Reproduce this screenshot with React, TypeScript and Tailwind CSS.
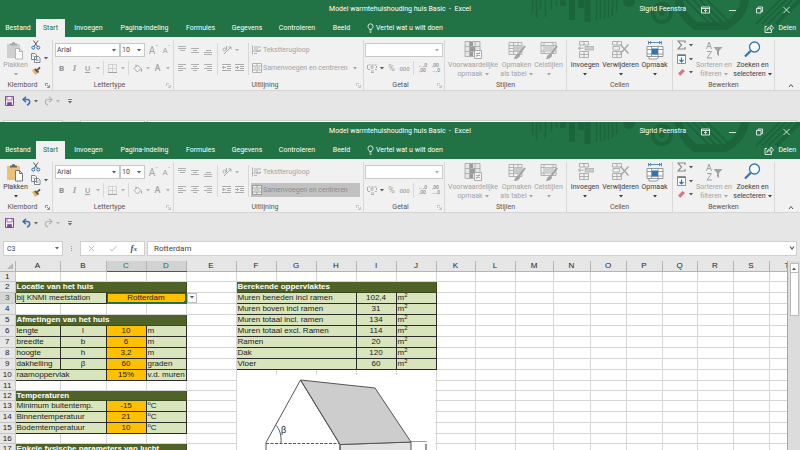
import type { ReactNode } from 'react';
import clsx from 'clsx';

const TABS = [
  { label: 'Bestand', width: 'w-[36px]' },
  { label: 'Start', width: 'w-[29px]' },
  { label: 'Invoegen', width: 'w-[47px]' },
  { label: 'Pagina-indeling', width: 'w-[65px]' },
  { label: 'Formules', width: 'w-[47px]' },
  { label: 'Gegevens', width: 'w-[46px]' },
  { label: 'Controleren', width: 'w-[54px]' },
  { label: 'Beeld', width: 'w-[35px]' },
];

const COLUMNS: [string, number][] = [
  ['A', 45], ['B', 46], ['C', 40], ['D', 40], ['E', 50], ['F', 40], ['G', 40], ['H', 40], ['I', 40], ['J', 40],
  ['K', 39], ['L', 40], ['M', 38], ['N', 37], ['O', 36], ['P', 36], ['Q', 35], ['R', 36], ['S', 36], ['T', 36],
];
const ROW_HEADER = 15;
const SHEET_WIDTH = COLUMNS.reduce((sum, [, w]) => sum + w, ROW_HEADER);
const SHORT_ROWS = [1, 11, 12, 16];
const ROW_NUMBERS = Array.from({ length: 17 }, (_, i) => i + 1);

type Kind = 'head' | 'label' | 'mid' | 'input' | 'unit' | 'selected';
type CellData = { col: string; span?: number; kind: Kind; text: ReactNode };

const sqm = <>m<sup className="text-[6px] leading-none">2</sup></>;
const degC = <><sup className="text-[6px] leading-none">o</sup>C</>;

function area(label: string, value: string): CellData[] {
  return [
    { col: 'F', span: 3, kind: 'label', text: label },
    { col: 'I', kind: 'mid', text: value },
    { col: 'J', kind: 'unit', text: sqm },
  ];
}

function size(label: string, symbol: string, value: string, unit: string): CellData[] {
  return [
    { col: 'A', kind: 'label', text: label },
    { col: 'B', kind: 'mid', text: symbol },
    { col: 'C', kind: 'input', text: value },
    { col: 'D', kind: 'unit', text: unit },
  ];
}

function param(label: string, value: string, unit: ReactNode): CellData[] {
  return [
    { col: 'A', span: 2, kind: 'label', text: label },
    { col: 'C', kind: 'input', text: value },
    { col: 'D', kind: 'unit', text: unit },
  ];
}

const CELLS: Record<number, CellData[]> = {
  2: [
    { col: 'A', span: 4, kind: 'head', text: 'Locatie van het huis' },
    { col: 'F', span: 5, kind: 'head', text: 'Berekende oppervlaktes' },
  ],
  3: [
    { col: 'A', span: 2, kind: 'label', text: 'bij KNMI meetstation' },
    { col: 'C', span: 2, kind: 'selected', text: 'Rotterdam' },
    ...area('Muren beneden incl ramen', '102,4'),
  ],
  4: area('Muren boven incl ramen', '31'),
  5: [{ col: 'A', span: 4, kind: 'head', text: 'Afmetingen van het huis' }, ...area('Muren totaal incl. ramen', '134')],
  6: [...size('lengte', 'l', '10', 'm'), ...area('Muren totaal excl. Ramen', '114')],
  7: [...size('breedte', 'b', '6', 'm'), ...area('Ramen', '20')],
  8: [...size('hoogte', 'h', '3,2', 'm'), ...area('Dak', '120')],
  9: [...size('dakhelling', 'β', '60', 'graden'), ...area('Vloer', '60')],
  10: param('raamoppervlak', '15%', 'v.d. muren'),
  12: [{ col: 'A', span: 4, kind: 'head', text: 'Temperaturen' }],
  13: param('Minimum buitentemp.', '-15', degC),
  14: param('Binnentemperatuur', '21', degC),
  15: param('Bodemtemperatuur', '10', degC),
  17: [{ col: 'A', span: 4, kind: 'head', text: 'Enkele fysische parameters van lucht' }],
};

const KIND_CLASS: Record<Kind, string> = {
  head: 'bg-[#4f6228] text-white font-bold border-[#3a4a1c]',
  label: 'bg-[#d8e4bc] border-[#2b2b2b]',
  mid: 'bg-[#d8e4bc] border-[#2b2b2b] text-center',
  input: 'bg-[#ffc000] border-[#2b2b2b] text-center',
  unit: 'bg-[#d8e4bc] border-[#2b2b2b]',
  selected: 'relative bg-[#ffc000] border-[#217346] text-center',
};

function Caret({ className }: { className?: string }) {
  return (
    <svg viewBox="0 0 4 3" className={clsx('h-[3px] w-1 shrink-0', className)} fill="currentColor" aria-hidden="true">
      <path d="M0 0h4L2 2.6z" />
    </svg>
  );
}

function CaretButton({ label, dark }: { label: string; dark?: boolean }) {
  return (
    <button aria-label={label} className={clsx('flex h-[14px] w-[7px] items-center justify-center', dark ? 'text-[#555]' : 'text-[#b5b5b5]')}>
      <Caret />
    </button>
  );
}

function Icon({ w = 10, h = 10, children }: { w?: number; h?: number; children: ReactNode }) {
  return (
    <svg width={w} height={h} viewBox={`0 0 ${w} ${h}`} fill="none" stroke="currentColor" strokeWidth="1" aria-hidden="true" className="shrink-0">
      {children}
    </svg>
  );
}

function Tool({ label, children }: { label: string; children: ReactNode }) {
  return (
    <button aria-label={label} className="flex h-[14px] w-[13px] items-center justify-center text-[#a3a3a3]">
      {children}
    </button>
  );
}

function Divider() {
  return <span className="mx-[2px] h-[14px] w-px bg-[#d8d8d8]" />;
}

function Group({ label, width, launcher, launcherDark, children }: { label: string; width: string; launcher?: boolean; launcherDark?: boolean; children: ReactNode }) {
  return (
    <section aria-label={label} className={clsx('flex shrink-0', width)}>
      <div className="flex h-[53px] grow flex-col">
        <div className="flex h-11 items-start">{children}</div>
        <div className="flex h-[9px] items-center text-[#555]">
          <span className="grow text-center">{label}</span>
          {launcher && (
            <button aria-label={`${label} instellingen`} className={clsx('mr-[2px]', launcherDark ? 'text-[#666]' : 'text-[#b5b5b5]')}>
              <Icon w={5} h={5}>
                <path d="M.5 3V.5H3M2 2l2 2M4.5 2v2.5H2" strokeWidth=".7" />
              </Icon>
            </button>
          )}
        </div>
      </div>
      <span className="mt-[3px] h-[50px] w-px bg-[#d8d8d8]" />
    </section>
  );
}

function BigButton({ lines, icon, width, enabled }: { lines: string[]; icon: ReactNode; width: string; enabled?: boolean }) {
  return (
    <button className={clsx('flex shrink-0 flex-col items-center pt-1 whitespace-nowrap', width, enabled ? 'text-[#3b3b3b]' : 'text-[#a3a3a3]')}>
      <span className="flex h-5 items-start">{icon}</span>
      <span className="leading-[9px]">{lines[0]}</span>
      <span className="flex h-[9px] items-center gap-[2px] leading-[9px]">
        {lines[1]}
        <Caret />
      </span>
    </button>
  );
}

function Combo({ label, value, width, disabled }: { label: string; value: string; width: string; disabled?: boolean }) {
  return (
    <span className={clsx('relative h-[14px] border border-[#c9c9c9] bg-white', width)}>
      <select aria-label={label} disabled={disabled} className="block h-3 w-full appearance-none pl-px text-[7px] leading-3 text-[#444]">
        <option>{value}</option>
      </select>
      <Caret className={clsx('pointer-events-none absolute top-[5px] right-[3px]', disabled ? 'text-[#aaa]' : 'text-[#555]')} />
    </span>
  );
}

function Lines({ d }: { d: string }) {
  return (
    <Icon w={9}>
      <path d={d} stroke="#b0b0b0" />
    </Icon>
  );
}

function TitleArt() {
  return (
    <svg viewBox="0 0 280 37" className="pointer-events-none absolute top-0 right-0 h-[37px] w-[280px]" fill="none" stroke="#1c653c" aria-hidden="true">
      <path d="M12.500 0v13M16.500 0v18M20.500 0v10M25.500 0v17M31.500 0v10M36.500 0v6" strokeWidth="1.500" />
      <path d="M43 0v6M52 0v20M61 0v8M67.500 0v22" strokeWidth="6" />
      <path d="M76.500 0v20M80.500 0v20M84.500 0v19M88.500 0v18M92.500 0v16M96.500 0v12" strokeWidth="1.500" />
      <circle cx="109" cy="1" r="6" fill="#1c653c" stroke="none" />
      <circle cx="142" cy="13" r="9" strokeWidth="4" />
      <circle cx="142" cy="13" r="3" fill="#1c653c" stroke="none" />
      <path d="M158-2c2 12 8 21 17 28h30c12-6 20-17 20-28" strokeWidth="8" />
      <path d="M164-2l29 29M171-2l28 28M178-2l26 26M185-2l24 24" strokeWidth="2" />
      <path d="M242 24L268-2M248 24L274-2M236 24L262-2" strokeWidth="2" />
      <path d="M256 24L282-2" strokeWidth="4" />
    </svg>
  );
}

function TitleBar() {
  return (
    <header className="relative bg-[#217346] text-white">
      <TitleArt />
      <div className="relative grid h-[19px] grid-cols-[1fr_auto_1fr] items-center">
        <span />
        <h1 className="whitespace-pre">Model warmtehuishouding huis Basic  -  Excel</h1>
        <div className="flex items-center justify-end">
          <span className="pr-[6px]">Sigrid Feenstra</span>
          <button aria-label="Weergaveopties voor lint" className="flex w-[27px] justify-center">
            <Icon w={9} h={8}>
              <path d="M.5 1h8v6h-8zM.5 2.500h8M4.500 6.500V4M3 5l1.500-1.500L6 5" strokeWidth=".8" />
            </Icon>
          </button>
          <button aria-label="Minimaliseren" className="flex w-[27px] justify-center">
            <Icon w={7} h={8}>
              <path d="M0 4.500h7" strokeWidth=".8" />
            </Icon>
          </button>
          <button aria-label="Vorig formaat" className="flex w-[27px] justify-center">
            <Icon w={7} h={8}>
              <path d="M.5 2.500h4.500V7H.5zM2 2.500V1h4.500v4.500H5" strokeWidth=".8" />
            </Icon>
          </button>
          <button aria-label="Sluiten" className="flex w-[27px] justify-center">
            <Icon w={7} h={8}>
              <path d="M.5 1l6 6M6.500 1l-6 6" strokeWidth=".8" />
            </Icon>
          </button>
        </div>
      </div>
      <nav className="relative flex h-[18px] items-stretch">
        {TABS.map(({ label, width }) => (
          <button key={label} className={clsx('shrink-0 text-center', width, label === 'Start' && 'bg-[#f1f1f1] text-[#217346]')}>
            {label}
          </button>
        ))}
        <button className="ml-2 flex items-center gap-[2px]">
          <Icon w={7} h={10}>
            <path d="M2.500 6.500C2.500 5.500 1 5 1 3.300a2.500 2.500 0 0 1 5 0C6 5 4.500 5.500 4.500 6.500zM2.500 8h2M2.800 9.300h1.500" strokeWidth=".8" />
          </Icon>
          Vertel wat u wilt doen
        </button>
        <button className="mr-1 ml-auto flex items-center gap-1">
          <Icon w={10} h={9}>
            <path d="M3 2.500H1v6h6.500V6M3 6.500c0-2.500 1.500-3.500 4-3.500V1l2.500 3L7 6.500v-2c-2 0-3 .5-4 2z" strokeWidth=".8" />
          </Icon>
          Delen
        </button>
      </nav>
    </header>
  );
}

function PasteIcon({ enabled }: { enabled: boolean }) {
  return (
    <Icon w={19} h={19}>
      <path d="M1 3h13v14H1z" fill={enabled ? '#edc079' : '#cfcfcf'} stroke="none" />
      <path d="M4 4.500V2.500h2C6 .5 9 .5 9 2.500h2v2z" fill={enabled ? '#666' : '#a8a8a8'} stroke="none" />
      <path d="M9.500 7.500h4l3 3v7.500h-7zM13.500 7.500v3h3" fill="#fff" stroke={enabled ? '#777' : '#b5b5b5'} />
    </Icon>
  );
}

function Ribbon({ pasteEnabled, mergeActive }: { pasteEnabled: boolean; mergeActive: boolean }) {
  return (
    <div className="flex h-[54px] shrink-0 border-b border-[#d5d5d5] bg-[#f1f1f1]">
      <Group label="Klembord" width="w-[53px]" launcher launcherDark>
        <BigButton
          lines={['Plakken']}
          width="w-[31px]"
          enabled={pasteEnabled}
          icon={<PasteIcon enabled={pasteEnabled} />}
        />
        <div className="flex flex-col gap-[3px] pt-[3px]">
          <button aria-label="Knippen" className="flex">
            <Icon>
              <path d="M2.500.5l4 6M7 .5l-4 6" stroke="#5a5a5a" />
              <circle cx="2.300" cy="7.600" r="1.500" stroke="#2f6db5" />
              <circle cx="7.300" cy="7.600" r="1.500" stroke="#2f6db5" />
            </Icon>
          </button>
          <button aria-label="Kopiëren" className="flex items-center gap-[3px] text-[#555]">
            <Icon>
              <path d="M.5.500h3.500l1.500 1.500v4.500h-5zM3.500 3.500h4L9 5v4.500H3.500z" fill="#fff" stroke="#777" strokeWidth=".9" />
              <path d="M5 6h2.500M5 7.500h2.500M1.500 3h1.500" stroke="#5b8ac0" strokeWidth=".7" />
            </Icon>
            <Caret />
          </button>
          <button aria-label="Opmaak kopiëren" className="flex">
            <Icon>
              <path d="M1 4l3-1.500L7 6 5 9 3.500 8z" fill="#eab35f" stroke="none" />
              <path d="M4 3l3.500 3.500M6.500 3.800L9 1.300" stroke="#555" strokeWidth="1.800" />
            </Icon>
          </button>
        </div>
      </Group>

      <Group label="Lettertype" width="w-[121px]" launcher>
        <div className="flex flex-col gap-1 pt-[6px] pl-[2px]">
          <div className="flex items-center">
            <Combo label="Lettertype" value="Arial" width="w-[65px]" />
            <Combo label="Tekengrootte" value="10" width="w-[25px]" />
            <span className="w-[2px]" />
            <Tool label="Tekengrootte vergroten"><span className="text-[10px]">A</span><sup className="text-[6px]">ˆ</sup></Tool>
            <Tool label="Tekengrootte verkleinen"><span className="text-[8px]">A</span><sup className="text-[6px]">ˇ</sup></Tool>
          </div>
          <div className="flex items-center">
            <Tool label="Vet"><b className="text-[8px] text-[#8c8c8c]">B</b></Tool>
            <Tool label="Cursief"><i className="font-['Liberation_Serif'] text-[9px] font-bold">I</i></Tool>
            <Tool label="Onderstrepen"><u className="text-[8px] font-medium">U</u></Tool>
            <CaretButton label="Onderstrepingsstijl" />
            <Divider />
            <Tool label="Randen">
              <Icon w={9} h={9}>
                <path d="M.5 8.500V.5h8v8M4.500.500v8M.5 4.500h8" strokeWidth=".7" stroke="#c4c4c4" />
                <path d="M0 8.500h9" />
              </Icon>
            </Tool>
            <CaretButton label="Meer randen" />
            <Divider />
            <Tool label="Opvulkleur">
              <Icon w={10} h={9}>
                <path d="M1 4.500L4.500 1 8 4.500 4.500 8zM3 3V.5" strokeWidth=".9" />
                <path d="M8.500 5v2.500" strokeWidth="1.200" />
              </Icon>
            </Tool>
            <CaretButton label="Meer opvulkleuren" />
            <Tool label="Tekstkleur"><span className="text-[9px] font-medium">A</span></Tool>
            <CaretButton label="Meer tekstkleuren" />
          </div>
        </div>
      </Group>

      <Group label="Uitlijning" width="w-[190px]" launcher>
        <div className="flex items-start pt-[6px] pl-[2px]">
          <div className="grid grid-cols-3 gap-y-1">
            <Tool label="Boven uitlijnen"><Lines d="M0 1.500h8M0 3.500h8M2 5.500h5" /></Tool>
            <Tool label="Midden uitlijnen"><Lines d="M0 3.500h8M2 5.500h4M0 7.500h8" /></Tool>
            <Tool label="Onder uitlijnen"><Lines d="M2 5.500h5M0 7.500h8M0 9.500h8" /></Tool>
            <Tool label="Links uitlijnen"><Lines d="M0 1.500h8M0 3.500h5M0 5.500h8M0 7.500h5" /></Tool>
            <Tool label="Centreren"><Lines d="M0 1.500h8M2 3.500h4M0 5.500h8M2 7.500h4" /></Tool>
            <Tool label="Rechts uitlijnen"><Lines d="M0 1.500h8M3 3.500h5M0 5.500h8M3 7.500h5" /></Tool>
          </div>
          <span className="mx-[2px] h-8 w-px bg-[#d8d8d8]" />
          <div className="flex w-[28px] flex-col gap-1">
            <div className="flex">
              <Tool label="Afdrukstand">
                <Icon>
                  <path d="M2 9l7-7M6.500 2H9v2.500" strokeWidth=".9" />
                  <circle cx="2.500" cy="4.500" r="1.500" strokeWidth=".8" />
                  <path d="M4.500 1v4" strokeWidth=".9" />
                </Icon>
              </Tool>
              <CaretButton label="Afdrukstand kiezen" />
            </div>
            <div className="flex">
              <Tool label="Inspringing verkleinen">
                <Icon w={9}>
                  <path d="M0 1.500h9M5 3.500h4M5 5.500h4M0 7.500h9M4 4.500H.5M2 3L.5 4.500 2 6" strokeWidth=".9" />
                </Icon>
              </Tool>
              <Tool label="Inspringing vergroten">
                <Icon w={9}>
                  <path d="M0 1.500h9M5 3.500h4M5 5.500h4M0 7.500h9M0 4.500h3.500M2 3l1.500 1.500L2 6" strokeWidth=".9" />
                </Icon>
              </Tool>
            </div>
          </div>
          <span className="h-8 w-px bg-[#d8d8d8]" />
          <div className="ml-[2px] flex flex-col gap-1 whitespace-nowrap text-[#a3a3a3]">
            <button className="flex h-[14px] items-center gap-px pl-px">
              <Icon w={10}>
                <path d="M.5.500v9M2 2h7M2 4h4M2 8.500h3M.5 6h8V4.500M4 6h4" strokeWidth=".8" />
              </Icon>
              Tekstterugloop
            </button>
            <button
              aria-pressed={mergeActive}
              className={clsx('flex h-[14px] w-[109px] items-center gap-px pl-px', mergeActive && 'bg-[#c1c1c1] text-[#8c8c8c]')}
            >
              <Icon w={10}>
                <path d="M.5.500h9v9h-9zM.5 3h9M.5 7h9M5 .5V3M5 7v2.500" fill="#f6f6f6" strokeWidth=".8" />
                <path d="M2 5h6" strokeWidth=".8" />
              </Icon>
              <span className="grow text-left">Samenvoegen en centreren</span>
              {!mergeActive && <Caret className="mr-[3px]" />}
            </button>
          </div>
        </div>
      </Group>

      <Group label="Getal" width="w-[81px]" launcher>
        <div className="flex flex-col gap-1 pt-[6px] pl-px">
          <Combo label="Getalnotatie" value="" width="w-[78px]" disabled />
          <div className="flex items-center">
            <Tool label="Financiële notatie">
              <Icon w={10} h={9}>
                <path d="M.5 3V1h9v4.500H7M.5 3v2.500H3" strokeWidth=".9" strokeDasharray="2 1" />
                <circle cx="5" cy="3.300" r="1.200" strokeWidth=".8" />
                <path d="M4 7h3M4 8.500h3" strokeWidth=".8" />
              </Icon>
            </Tool>
            <CaretButton label="Valuta kiezen" dark />
            <Tool label="Procentnotatie"><span className="text-[9px]">%</span></Tool>
            <Tool label="Duizendtalnotatie"><span className="text-[6px] font-medium">000</span></Tool>
            <Divider />
            <Tool label="Meer decimalen">
              <span className="text-[5px] leading-[5px] font-medium text-[#8c8c8c]">←,0<br />,00</span>
            </Tool>
            <Tool label="Minder decimalen">
              <span className="text-[5px] leading-[5px] font-medium text-[#8c8c8c]">,00<br />→,0</span>
            </Tool>
          </div>
        </div>
      </Group>

      <Group label="Stijlen" width="w-[122px]">
        <BigButton
          lines={['Voorwaardelijke', 'opmaak']}
          width="w-[56px]"
          icon={
            <Icon w={18} h={19}>
              <path d="M1 .5h15v15H1zM1 5.500h15M1 10.500h15M5.500.500v15M11 .5v15" fill="#e6e6e6" strokeWidth=".8" />
              <path d="M6 1h3v4H6zM6 6h5v4H6zM6 11h3v4H6z" fill="#9a9a9a" stroke="none" />
              <path d="M10.500 9.500h7v8h-7z" fill="#f6f6f6" strokeWidth=".9" />
              <path d="M12 12.500h4M12 14.500h4M15.500 11l-3 5" strokeWidth=".8" />
            </Icon>
          }
        />
        <BigButton
          lines={['Opmaken', 'als tabel']}
          width="w-[31px]"
          icon={
            <Icon w={18} h={19}>
              <path d="M1 1.500h13v12H1zM1 4.500h13M1 7.500h13M1 10.500h13M5.500 1.500v12M10 1.500v12" fill="#f0f0f0" strokeWidth=".8" />
              <path d="M5.500 4.500H14v6H5.500z" fill="#c9c9c9" stroke="none" />
              <path d="M17 5l-6 8" strokeWidth="2" />
              <path d="M6 18c1-3 2-5 5-5.500l1 1.500c0 2.500-3 4-6 4z" fill="#a3a3a3" stroke="none" />
            </Icon>
          }
        />
        <BigButton
          lines={['Celstijlen']}
          width="w-[33px]"
          icon={
            <Icon w={18} h={19}>
              <path d="M1 1.500h15v11H1zM1 4.500h15M4 1.500v11M13 1.500v11M1 10h15" fill="#f0f0f0" strokeWidth=".8" />
              <path d="M4 4.500h9V10H4z" fill="#cfcfcf" stroke="none" />
              <path d="M17 5l-6 8" strokeWidth="2" />
              <path d="M6 18c1-3 2-5 5-5.500l1 1.500c0 2.500-3 4-6 4z" fill="#a3a3a3" stroke="none" />
            </Icon>
          }
        />
      </Group>

      <Group label="Cellen" width="w-[106px]">
        <BigButton
          lines={['Invoegen']}
          width="w-[36px]"
          enabled
          icon={
            <span className="text-[#a8a8a8]">
              <Icon w={17} h={18}>
                <path d="M2.500.500h9V4h-9zM7 .5V4M2.500 10.500h9v6h-9zM7 10.500v6M2.500 13.500h9" strokeWidth=".9" />
                <path d="M8 5.500h9v3.500H8z" fill="#cdcdcd" strokeWidth=".7" />
                <path d="M6.500 7.200h-5M3.500 5.200l-2 2 2 2" />
              </Icon>
            </span>
          }
        />
        <BigButton
          lines={['Verwijderen']}
          width="w-[35px]"
          enabled
          icon={
            <span className="text-[#a8a8a8]">
              <Icon w={17} h={18}>
                <path d="M.5.500h9V4h-9zM5 .5V4M.5 10.500h9v6h-9zM5 10.500v6M.5 13.500h9M1 5.500h6.500V9H1z" strokeWidth=".9" />
                <path d="M8.500 3.500l8 9M16.500 3.500l-8 9" strokeWidth="1.500" />
              </Icon>
            </span>
          }
        />
        <BigButton
          lines={['Opmaak']}
          width="w-[33px]"
          enabled
          icon={
            <Icon w={18} h={19}>
              <path d="M1 5.500h16v10H1zM1 8.500h16M1 13h16M5.500 5.500v10M12 5.500v10M3 15.500v2.500h8l2-2.500" stroke="#808080" strokeWidth=".8" fill="#fff" />
              <path d="M6 7.500h6v6H6z" fill="#2f75b5" stroke="none" />
              <path d="M3 1.500h12M5 0L3.500 1.500 5 3M13 0l1.500 1.500L13 3M2.500 0v3.500M15.500 0v3.500" stroke="#2f75b5" strokeWidth=".8" />
            </Icon>
          }
        />
      </Group>

      <Group label="Bewerken" width="w-[102px]">
        <div className="flex w-[22px] flex-col gap-1 pt-[3px] pl-1 text-[#555]">
          <button aria-label="AutoSom" className="flex items-center gap-[3px]">
            <Icon w={9}>
              <path d="M8 3V1H1l3.500 4L1 9h7V7" stroke="#8a8a8a" strokeWidth="1.200" />
            </Icon>
            <Caret />
          </button>
          <button aria-label="Doorvoeren" className="flex items-center gap-[3px]">
            <Icon w={9} h={10}>
              <path d="M.5.500h8v9h-8z" fill="#fff" stroke="#777" strokeWidth=".8" />
              <path d="M.5 1.500h8" stroke="#777" />
              <path d="M4.500 3.500V8M2.500 6l2 2 2-2" stroke="#2f75b5" strokeWidth="1.200" />
            </Icon>
            <Caret />
          </button>
          <button aria-label="Wissen" className="flex items-center gap-[3px]">
            <Icon w={9} h={9}>
              <path d="M1 5.500L5.500 1l2.500 2L3.500 7.500z" fill="#e0708a" stroke="none" />
              <path d="M1 5.500l2.500 2" stroke="#c9a0ab" />
            </Icon>
            <Caret />
          </button>
        </div>
        <BigButton
          lines={['Sorteren en', 'filteren']}
          width="w-[38px]"
          icon={
            <Icon w={18} h={19}>
              <path d="M1.500 8l2.500-7 2.500 7M2.500 5.500h3M2 10.500h4.500L2 17h5" />
              <path d="M8.500 6h9l-3.500 4v5l-2-1.500V10z" fill="#a3a3a3" stroke="none" />
            </Icon>
          }
        />
        <BigButton
          lines={['Zoeken en', 'selecteren']}
          width="w-[39px]"
          enabled
          icon={
            <Icon w={17} h={18}>
              <circle cx="10.500" cy="6" r="5" stroke="#2f75b5" strokeWidth="1.300" fill="#fff" />
              <path d="M6.800 9.800L1 15.500" stroke="#2f75b5" strokeWidth="2.200" />
            </Icon>
          }
        />
      </Group>

      <button aria-label="Lint samenvouwen" className="mr-[6px] ml-auto self-end pb-[2px] text-[#555]">
        <Icon w={6} h={5}>
          <path d="M1 4l2-2.500L5 4" />
        </Icon>
      </button>
    </div>
  );
}

function QuickAccess() {
  return (
    <div className="flex h-[28px] shrink-0 items-start bg-[#e6e6e6] pt-[5px] pl-[5px] text-[#666]">
      <button aria-label="Opslaan" className="flex">
        <Icon w={9}>
          <path d="M.5.500h8v9h-8z" fill="#f3ecf7" stroke="#80499c" />
          <path d="M2 .5h5V4H2z" fill="#fff" stroke="#80499c" strokeWidth=".7" />
          <path d="M2.500 9.500V6.500h4v3" fill="#80499c" stroke="#80499c" strokeWidth=".7" />
        </Icon>
      </button>
      <button aria-label="Ongedaan maken" className="ml-2 flex items-center gap-[3px]">
        <Icon w={9}>
          <path d="M4 .8L1 3.500l3 2.700M1 3.500h4.500c2.500 0 3.500 4-.5 5.500" stroke="#3b6fb0" strokeWidth="1.500" />
        </Icon>
        <Caret />
      </button>
      <button aria-label="Opnieuw" className="ml-[6px] flex items-center gap-[3px] text-[#b5b5b5]">
        <Icon w={9}>
          <path d="M5 .8l3 2.700-3 2.700M8 3.500H3.500C1 3.500 0 7.500 4 9" strokeWidth="1.200" />
        </Icon>
        <Caret />
      </button>
      <button aria-label="Werkbalk aanpassen" className="ml-2 flex pt-[3px]">
        <Icon w={4} h={5}>
          <path d="M0 .5h4" strokeWidth=".8" />
          <path d="M0 2h4L2 4.500z" fill="currentColor" stroke="none" />
        </Icon>
      </button>
    </div>
  );
}

// Only the top edge of the bar shows under the upper window.
function FormulaBarEdge() {
  return (
    <div className="flex h-[3px] bg-[#e6e6e6] px-[3px] pt-px">
      <span className="w-[60px] border border-b-0 border-[#cfcfcf] bg-white" />
      <span className="ml-[17px] w-[65px] border border-b-0 border-[#cfcfcf] bg-white" />
      <span className="ml-[2px] grow border border-b-0 border-[#cfcfcf] bg-white" />
    </div>
  );
}

function FormulaBar({ cell, value }: { cell: string; value: string }) {
  return (
    <div className="flex h-5 shrink-0 items-start bg-[#e6e6e6] px-[3px] text-[8px] text-[#444]">
      <span className="relative flex w-[60px]">
        <input aria-label="Naamvak" defaultValue={cell} className="h-[15px] w-full border border-[#cfcfcf] bg-white pl-[3px] text-[7px]" />
        <Caret className="pointer-events-none absolute top-[6px] right-1 text-[#666]" />
      </span>
      <span className="flex h-[15px] w-[17px] flex-col items-center justify-center gap-px">
        <i className="size-px bg-[#999]" />
        <i className="size-px bg-[#999]" />
        <i className="size-px bg-[#999]" />
      </span>
      <div className="flex h-[15px] w-[65px] items-center justify-around border border-[#cfcfcf] bg-white text-[#bbb]">
        <button aria-label="Annuleren">
          <Icon w={7} h={7}><path d="M1 1l5 5M6 1L1 6" /></Icon>
        </button>
        <button aria-label="Invoeren">
          <Icon w={8} h={7}><path d="M1 4l2 2 4.500-5" /></Icon>
        </button>
        <button aria-label="Functie invoegen" className="font-['Liberation_Serif'] text-[9px] font-bold text-[#555] italic">
          f<span className="text-[7px]">x</span>
        </button>
      </div>
      <span className="relative ml-[2px] flex grow">
        <input aria-label="Formulebalk" defaultValue={value} className="h-[15px] w-full border border-[#cfcfcf] bg-white pl-[6px]" />
        <svg viewBox="0 0 6 4" className="pointer-events-none absolute top-[5px] right-[2px] h-1 w-[6px]" fill="none" stroke="#555" aria-hidden="true">
          <path d="M1 .5l2 2.500L5 .5" strokeWidth="1.200" />
        </svg>
      </span>
    </div>
  );
}

function SheetRow({ row }: { row: number }) {
  const cells: ReactNode[] = [];
  const data = CELLS[row] ?? [];
  for (let i = 0; i < COLUMNS.length; i++) {
    const col = COLUMNS[i][0];
    const cell = data.find((c) => c.col === col);
    if (!cell) {
      cells.push(<td key={col} className="border border-[#d6d6d6] p-0" />);
      continue;
    }
    cells.push(
      <td key={col} colSpan={cell.span} className={clsx('border px-px py-0 whitespace-nowrap', KIND_CLASS[cell.kind])}>
        {cell.text}
        {cell.kind === 'selected' && (
          <>
            <span className="pointer-events-none absolute inset-0 border border-[#217346]" />
            <span className="pointer-events-none absolute -right-px -bottom-px size-[3px] bg-[#217346]" />
            <button aria-label="Meetstation kiezen" className="absolute top-0 -right-[11px] flex h-[10px] w-[10px] items-center justify-center border border-[#bbb] bg-white text-[#3b5a80]">
              <Caret />
            </button>
          </>
        )}
      </td>,
    );
    i += (cell.span ?? 1) - 1;
  }
  return (
    <tr className={SHORT_ROWS.includes(row) ? 'h-[10px]' : 'h-[11px]'}>
      <th scope="row" className={clsx('border border-l-0 p-0 font-normal', row === 3 ? 'border-[#c6c6c6] border-r-[#217346] bg-[#d6d6d6] text-[#217346]' : 'border-[#c6c6c6] bg-[#e6e6e6]')}>
        {row}
      </th>
      {cells}
    </tr>
  );
}

function HouseDrawing() {
  return (
    <svg viewBox="0 0 198 90" className="absolute top-[114px] left-[237px] h-[90px] w-[198px] bg-white" fill="none" stroke="#555" strokeWidth="1">
      <path d="M103 69.500L174 67v23h-71z" fill="#e2e2e2" />
      <path d="M63.500 5L138 13l36 54-71 2.500z" fill="#cdcdcd" />
      <path d="M29 90V67.500L63.500 5 103 69.500V90" />
      <path d="M29 68.500h74" strokeDasharray="3 1.500" />
      <path d="M38.500 50c4.500 4 6 11 5.500 18" />
      <path d="M174 66.500h16" strokeWidth=".6" />
      <path d="M189 69v21" strokeWidth="1.200" />
      <text x="44" y="58" className="font-['Liberation_Sans'] text-[9px]" fill="#222" stroke="none">β</text>
    </svg>
  );
}

function Sheet() {
  return (
    <main className="flex grow overflow-hidden bg-[#e6e6e6]">
      <div className="relative grow basis-0 overflow-hidden border-r border-[#a6a6a6]">
        <table className="table-fixed border-collapse bg-white font-['Liberation_Sans',sans-serif] text-[8px] leading-[9px] text-[#222]" style={{ width: SHEET_WIDTH }}>
          <colgroup>
            <col style={{ width: ROW_HEADER }} />
            {COLUMNS.map(([name, w]) => <col key={name} style={{ width: w }} />)}
          </colgroup>
          <thead>
            <tr className="h-[10px] bg-[#e6e6e6]">
              <th aria-label="Alles selecteren" className="border-r border-b border-[#b5b5b5] p-0">
                <svg viewBox="0 0 6 6" className="mr-[2px] ml-auto size-[6px]" fill="#b7b7b7" aria-hidden="true"><path d="M6 0v6H0z" /></svg>
              </th>
              {COLUMNS.map(([name]) => (
                <th
                  key={name}
                  scope="col"
                  className={clsx(
                    'border-r border-b p-0 font-normal',
                    name === 'C' || name === 'D' ? 'border-r-[#b5b5b5] border-b-[#217346] bg-[#d2d2d2] text-[#217346]' : 'border-[#b5b5b5]',
                  )}
                >
                  {name}
                </th>
              ))}
            </tr>
          </thead>
          <tbody>
            {ROW_NUMBERS.map((row) => <SheetRow key={row} row={row} />)}
          </tbody>
        </table>
        <HouseDrawing />
      </div>
      <div className="flex w-3 shrink-0 flex-col items-center bg-[#dcdcdc] pt-[2px]">
        <button aria-label="Omhoog schuiven" className="flex h-[10px] w-[9px] items-center justify-center border border-[#bbb] bg-white text-[#555]">
          <Caret className="rotate-180" />
        </button>
        <span className="h-[43px] w-[9px] border border-t-0 border-[#bbb] bg-white" />
      </div>
    </main>
  );
}

export default function App() {
  return (
    <div className="flex h-screen flex-col overflow-hidden bg-[#e6e6e6] font-['Roboto',sans-serif] text-[7px] leading-[9px]">
      <section aria-label="Bovenste venster" className="shrink-0">
        <TitleBar />
        <Ribbon pasteEnabled={false} mergeActive={false} />
        <QuickAccess />
        <FormulaBarEdge />
      </section>
      <section aria-label="Onderste venster" className="flex min-h-0 grow flex-col">
        <TitleBar />
        <Ribbon pasteEnabled mergeActive />
        <QuickAccess />
        <FormulaBar cell="C3" value="Rotterdam" />
        <Sheet />
      </section>
    </div>
  );
}
